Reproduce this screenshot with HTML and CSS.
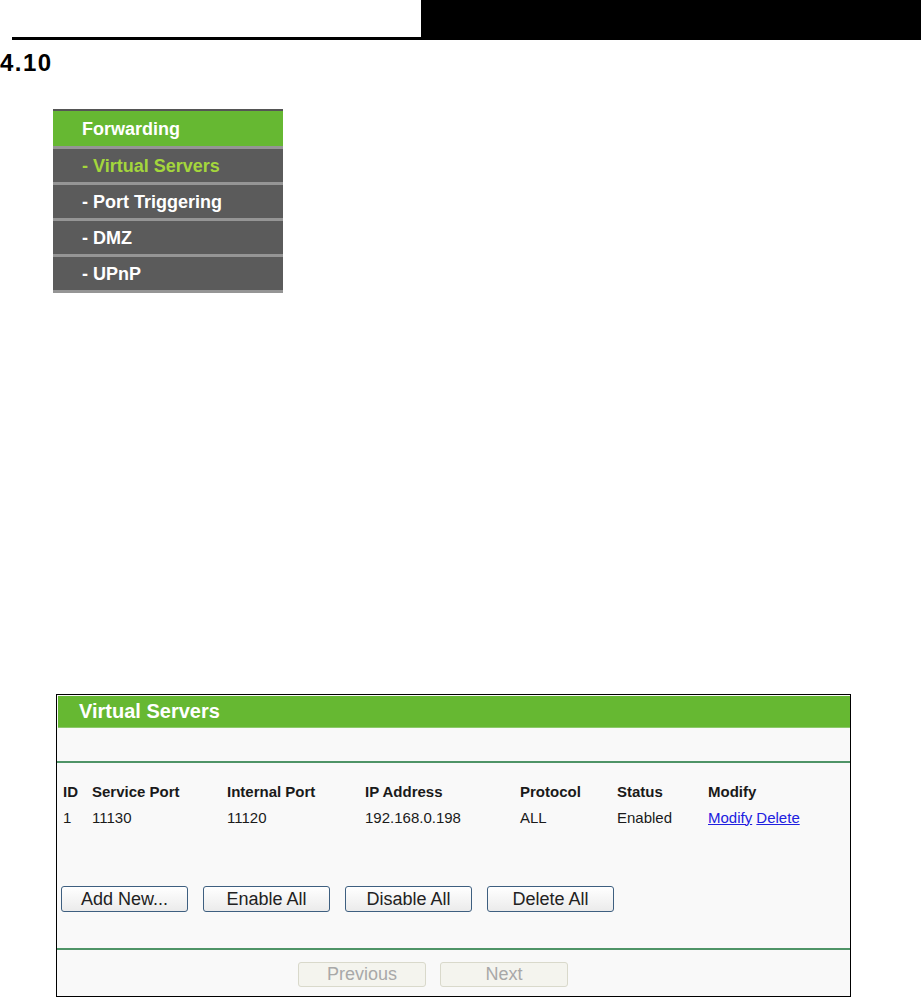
FILE: index.html
```html
<!DOCTYPE html>
<html lang="en">
<head>
    <meta charset="UTF-8">
    <title>4.10 Forwarding</title>
    <link rel="stylesheet" href="styles.css">
</head>
<body>
    <div class="page-top">
        <div class="top-rule"></div>
        <div class="top-bar"></div>
    </div>

    <h1 class="section-no">4.10</h1>

    <div class="menu">
        <div class="menu-item menu-head">Forwarding</div>
        <div class="menu-item current">- Virtual Servers</div>
        <div class="menu-item">- Port Triggering</div>
        <div class="menu-item">- DMZ</div>
        <div class="menu-item">- UPnP</div>
    </div>

    <div class="panel">
        <div class="panel-title">Virtual Servers</div>
        <div class="panel-blank"></div>
        <div class="panel-body">
            <table class="servers">
                <tr>
                    <th class="c-id">ID</th>
                    <th class="c-svc">Service Port</th>
                    <th class="c-int">Internal Port</th>
                    <th class="c-ip">IP Address</th>
                    <th class="c-proto">Protocol</th>
                    <th class="c-status">Status</th>
                    <th>Modify</th>
                </tr>
                <tr>
                    <td>1</td>
                    <td>11130</td>
                    <td>11120</td>
                    <td>192.168.0.198</td>
                    <td>ALL</td>
                    <td>Enabled</td>
                    <td><a href="#">Modify</a> <a href="#">Delete</a></td>
                </tr>
            </table>
            <div class="actions">
                <button class="btn">Add New...</button>
                <button class="btn">Enable All</button>
                <button class="btn">Disable All</button>
                <button class="btn">Delete All</button>
            </div>
        </div>
        <div class="pager">
            <button class="btn btn-off" disabled>Previous</button>
            <button class="btn btn-off" disabled>Next</button>
        </div>
    </div>
</body>
</html>
```

FILE: styles.css
```css
body {
    margin: 0;
    background: #fff;
    font-family: "Liberation Sans", Arial, sans-serif;
    color: #1a1a1a;
}
.page-top {
    display: flex;
    height: 40px;
}
.top-rule {
    width: 409px;
    margin-left: 12px;
    border-bottom: 3px solid #000;
}
.top-bar {
    flex: 1;
    background: #000;
}
.section-no {
    margin: 10px 0 0 0;
    font-size: 24px;
    line-height: 26px;
    font-weight: bold;
    letter-spacing: 1.5px;
    color: #000;
}
.menu {
    width: 230px;
    margin: 33px 0 0 53px;
    border-top: 2px solid #555;
}
.menu-item {
    height: 33px;
    line-height: 34px;
    padding-left: 29px;
    background: #5b5b5b;
    border-bottom: 3px solid #959595;
    color: #fff;
    font-size: 18px;
    font-weight: bold;
}
.menu-head {
    height: 35px;
    line-height: 37px;
    background: #66b832;
}
.menu-item.current {
    color: #a4d63c;
}
.panel {
    width: 793px;
    height: 301px;
    margin: 401px 0 0 56px;
    border: 1px solid #000;
    background: #f9f9f9;
    display: flex;
    flex-direction: column;
}
.panel-title {
    margin: 1px 0 0 1px;
    height: 31px;
    line-height: 31px;
    padding-left: 21px;
    background: #66b832;
    border-bottom: 1px solid #8cc96a;
    color: #fff;
    font-size: 20px;
    font-weight: bold;
}
.panel-blank {
    height: 33px;
    border-bottom: 2px solid #4f9467;
}
.panel-body {
    height: 187px;
    border-bottom: 2px solid #4f9467;
    padding-top: 15px;
    box-sizing: border-box;
}
.servers {
    border-collapse: collapse;
    margin-left: 4px;
    font-size: 15px;
}
.servers th,
.servers td {
    height: 26px;
    padding: 0 0 0 2px;
    text-align: left;
    white-space: nowrap;
}
.servers th {
    font-weight: bold;
}
.c-id { width: 27px; }
.c-svc { width: 133px; }
.c-int { width: 136px; }
.c-ip { width: 153px; }
.c-proto { width: 95px; }
.c-status { width: 89px; }
.servers a {
    color: #2020e0;
    text-decoration: underline;
}
.actions {
    display: flex;
    gap: 15px;
    margin: 56px 0 0 4px;
}
.btn {
    width: 127px;
    height: 26px;
    padding: 0;
    border: 1px solid #3e5f80;
    border-radius: 3px;
    background: linear-gradient(#ffffff, #ebebeb);
    font-family: "Liberation Sans", Arial, sans-serif;
    font-size: 18px;
    color: #222;
}
.pager {
    display: flex;
    gap: 14px;
    margin: 12px 0 0 241px;
}
.btn-off {
    width: 128px;
    height: 25px;
    border-color: #d9d9cb;
    background: #f4f4ee;
    color: #a8a8a8;
}
```
